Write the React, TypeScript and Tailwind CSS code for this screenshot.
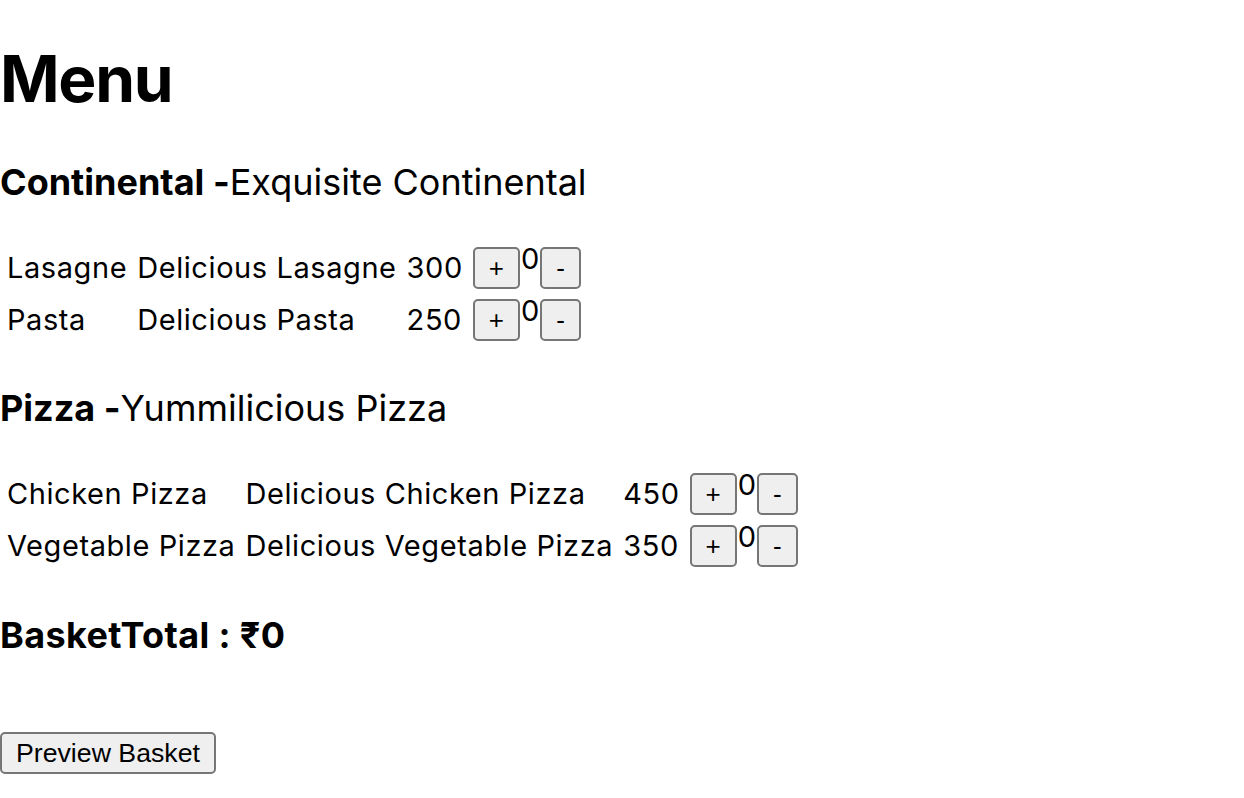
import React from "react";

interface itemType {
  name: string;
  description: string;
  price: number;
}

interface categoryType {
  title: string;
  description: string;
  items: Array<itemType>;
}

const menu: Array<categoryType> = [
  {
    title: "Continental",
    description: "Exquisite Continental",
    items: [
      { name: "Lasagne", description: "Delicious Lasagne", price: 300 },
      { name: "Pasta", description: "Delicious Pasta", price: 250 },
    ],
  },
  {
    title: "Pizza",
    description: "Yummilicious Pizza",
    items: [
      { name: "Chicken Pizza", description: "Delicious Chicken Pizza", price: 450 },
      { name: "Vegetable Pizza", description: "Delicious Vegetable Pizza", price: 350 },
    ],
  },
];

const btn =
  "h-[42px] rounded-[5px] border-2 border-[#767676] bg-[#efefef] px-[14px] text-[26px] leading-none tracking-normal text-black font-['Liberation_Sans',Arial,sans-serif]";

const Row = ({ item }: { item: itemType }) => {
  const [count, setCount] = React.useState(0);
  return (
    <tr>
      <td className="p-[3px] align-middle leading-[42px] whitespace-nowrap">{item.name}</td>
      <td className="p-[3px] align-middle leading-[42px] whitespace-nowrap">{item.description}</td>
      <td className="p-[3px] align-middle leading-[42px] whitespace-nowrap">{item.price}</td>
      <td className="p-[3px] align-middle">
        <div className="flex items-start">
          <button className={btn} onClick={() => setCount(count + 1)}>
            +
          </button>
          <span className="-mt-[2px] px-[1px] leading-[28px] tracking-normal">{count}</span>
          <button className={btn} onClick={() => setCount(Math.max(0, count - 1))}>
            -
          </button>
        </div>
      </td>
    </tr>
  );
};

export default function App() {
  return (
    <div className="flex flex-col items-start bg-white text-black font-['Inter','Noto_Sans',sans-serif]">
      <h1 className="mt-[47px] text-[64px] font-bold leading-[64px] tracking-[-0.02em]">Menu</h1>

      {menu.map((cat, i) => (
        <div key={cat.title} className="flex flex-col items-start">
          <h3 className={`${i === 0 ? "mt-[53px]" : "mt-[42px]"} text-[36px] leading-[36px]`}>
            <b className="font-bold">{cat.title} -</b>
            {cat.description}
          </h3>
          <table className="mt-[40px] border-separate border-spacing-[4px] text-[29px] tracking-[0.02em]">
            <tbody>
              {cat.items.map((item) => (
                <Row key={item.name} item={item} />
              ))}
            </tbody>
          </table>
        </div>
      ))}

      <h3 className="mt-[43px] text-[36px] font-bold leading-[36px] tracking-[0.01em]">BasketTotal : ₹0</h3>

      <button className="mt-[79px] h-[42px] rounded-[5px] border-2 border-[#767676] bg-[#efefef] px-[14px] text-[26.7px] leading-none font-['Liberation_Sans',Arial,sans-serif]">
        Preview Basket
      </button>
    </div>
  );
}
